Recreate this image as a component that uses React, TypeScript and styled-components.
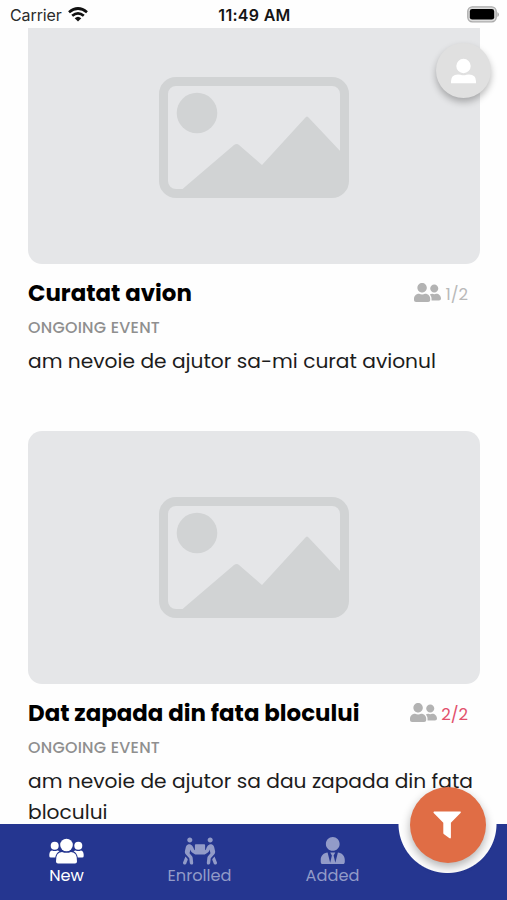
import React from 'react';
import styled, { createGlobalStyle } from 'styled-components';
import { FaPeopleCarry, FaUserTie, FaUserFriends } from 'react-icons/fa';

const GlobalStyle = createGlobalStyle`
  * { box-sizing: border-box; }
  body { margin: 0; background: #fff; }
`;

const Screen = styled.div`
  position: relative;
  width: 507px;
  height: 900px;
  overflow: hidden;
  display: flex;
  flex-direction: column;
  background: #fefefe;
  color: #000;
  font-family: Poppins, Inter, 'Liberation Sans', sans-serif;
  white-space: nowrap;
`;

const StatusBar = styled.header`
  flex: none;
  height: 28px;
  padding: 2px 8px 0 10px;
  display: grid;
  grid-template-columns: 1fr auto 1fr;
  align-items: center;
  font: 400 16px/26px Inter, sans-serif;
`;

const Carrier = styled.div`
  display: flex;
  align-items: center;
  gap: 6px;
  letter-spacing: -0.1px;
  color: #2b2b2b;

  svg { margin-bottom: 2px; }
`;

const Clock = styled.div`
  font-weight: 600;
  letter-spacing: 0.3px;
  color: #151515;
`;

const BatterySlot = styled.div`
  display: flex;
  justify-content: flex-end;
  padding-bottom: 2px;
`;

const Feed = styled.main`
  flex: 1;
  min-height: 0;
  overflow: hidden;
  padding: 0 27px 0 28px;
`;

const Card = styled.article`
  height: 420px;

  &:first-child { margin-top: -17px; }
`;

const Thumb = styled.div`
  height: 253px;
  border-radius: 14px;
  background: #e5e6e8;
  display: flex;
  justify-content: center;
  align-items: center;
`;

const TitleRow = styled.div`
  margin-top: 13px;
  height: 32px;
  display: flex;
  justify-content: space-between;
  align-items: center;
  padding-right: 12px;
`;

const Title = styled.h2`
  margin: 0;
  font-size: 22.9px;
  line-height: 32px;
  font-weight: 700;
`;

const Attendance = styled.div<{ $full: boolean }>`
  display: flex;
  align-items: center;
  gap: 4px;
  font-size: 16.5px;
  line-height: 24px;
  color: ${(p) => (p.$full ? '#e2506c' : '#b9b9b9')};

  svg { color: #b3b3b3; margin-bottom: 2px; }
  span { padding-top: 4px; }
`;

const Status = styled.div`
  margin-top: 7px;
  font-size: 15.9px;
  line-height: 24px;
  font-weight: 500;
  letter-spacing: 0.25px;
  color: #8f8f8f;
`;

const Description = styled.p`
  margin: 6px 0 0;
  font-size: 20.2px;
  line-height: 31px;
  color: #1c1c1c;
`;

const ProfileButton = styled.button`
  position: absolute;
  top: 43px;
  right: 16px;
  width: 55px;
  height: 55px;
  padding: 0;
  border: 0;
  border-radius: 50%;
  background: #e0e0e0;
  box-shadow: 0 4px 7px rgba(0, 0, 0, 0.27);
  display: grid;
  place-items: center;
`;

const TabBar = styled.nav`
  position: absolute;
  inset: auto 0 0 0;
  height: 76px;
  padding-right: 108px;
  display: grid;
  grid-template-columns: repeat(3, 133px);
  background: radial-gradient(circle at 447.5px 0, transparent 48.5px, #253690 49.5px);
`;

const Tab = styled.div<{ $active?: boolean }>`
  display: flex;
  flex-direction: column;
  align-items: center;
  padding-top: 13px;
  font-size: 16.2px;
  line-height: 24px;
  color: ${(p) => (p.$active ? '#fff' : '#929bc8')};
`;

const TabIcon = styled.div`
  height: 27px;
  display: flex;
  align-items: center;
`;

const FilterButton = styled.button`
  position: absolute;
  right: 21.5px;
  bottom: 37.5px;
  width: 76px;
  height: 76px;
  padding: 0;
  border: 0;
  border-radius: 50%;
  background: #e06d45;
  box-shadow: 0 4px 10px rgba(0, 0, 0, 0.3);
  display: grid;
  place-items: center;
`;

const WifiIcon = () => (
  <svg width="20" height="15" viewBox="0 0 20 15" fill="none" stroke="#111" strokeWidth="2.7">
    <path d="M1 5.2Q10-2.2 19 5.2" />
    <path d="M4.2 8.8Q10 3.8 15.8 8.8" />
    <path d="M6.7 11.2Q10 8.2 13.3 11.2L10 14.6Z" fill="#111" stroke="none" />
  </svg>
);

const BatteryIcon = () => (
  <svg width="32" height="17" viewBox="0 0 32 17">
    <rect x=".8" y=".8" width="28.4" height="15" rx="4.5" fill="#ddd" stroke="#aaa" strokeWidth="1.3" />
    <rect x="2.8" y="3" width="24.4" height="10.6" rx="2.4" fill="#000" />
    <path d="M30.4 6v5q1.6-1 1.6-2.5T30.4 6Z" fill="#aaa" />
  </svg>
);

const PhotoPlaceholder = () => (
  <svg width="190" height="121" viewBox="0 0 190 121">
    <rect x="4.5" y="4.5" width="181" height="112" rx="12.5" fill="none" stroke="#d1d3d4" strokeWidth="9" />
    <circle cx="38" cy="36" r="20.3" fill="#d1d3d4" />
    <path d="M22 113Q24 112 27 109L75 68Q78 66 80 68L103 88 146 41Q148 38 150 41L183 76V113Z" fill="#d1d3d4" />
  </svg>
);

const PersonIcon = () => (
  <svg width="26" height="26" viewBox="0 0 26 26" fill="#fff">
    <circle cx="12.5" cy="8" r="7.2" />
    <path d="M0 25.2v-2q0-6.8 7-6.8Q8.5 16.4 9.5 16.8q3 1 6 0 1-.4 2.5-.4 7 0 7 6.8v2Z" />
  </svg>
);

const GroupIcon = () => (
  <svg width="35" height="26" viewBox="0 0 35 26" fill="currentColor">
    <circle cx="17.5" cy="7" r="6.3" />
    <circle cx="5.7" cy="7.8" r="4" />
    <circle cx="29.3" cy="7.8" r="4" />
    <path d="M7 23.5Q6.5 14.3 13 14q4.5 1.7 9 0 6.5.3 6 9.5 0 2-2 2H9q-2 0-2-2Z" />
    <path d="M3 12.4q2.7 1.2 5.4 0 1.1 0 2 .9Q7 15 6.2 19.5H1.8Q.3 19.5.3 18q-.3-5 2.7-5.6ZM32 12.4q-2.7 1.2-5.4 0-1.1 0-2 .9Q28 15 28.8 19.5h4.4q1.5 0 1.5-1.5.3-5-2.7-5.6Z" />
  </svg>
);

const FunnelIcon = () => (
  <svg width="29" height="28" viewBox="0 0 29 28" fill="#fff">
    <path d="M1 .5H27.5Q28.3 1 27.5 2L17.9 11.7V26.5Q17.5 28 16.2 27L11 23.3Q10.3 22.8 10.3 22V11.7L.7 2Q0 1 1 .5Z" />
  </svg>
);

const events = [
  { title: 'Curatat avion', count: '1/2', full: false, text: ['am nevoie de ajutor sa-mi curat avionul'] },
  { title: 'Dat zapada din fata blocului', count: '2/2', full: true, text: ['am nevoie de ajutor sa dau zapada din fata', 'blocului'] },
];

export default function App() {
  return (
    <Screen>
      <GlobalStyle />
      <StatusBar>
        <Carrier>Carrier <WifiIcon /></Carrier>
        <Clock>11:49 AM</Clock>
        <BatterySlot><BatteryIcon /></BatterySlot>
      </StatusBar>
      <Feed>
        {events.map((e) => (
          <Card key={e.title}>
            <Thumb><PhotoPlaceholder /></Thumb>
            <TitleRow>
              <Title>{e.title}</Title>
              <Attendance $full={e.full}>
                <FaUserFriends size={27} />
                <span>{e.count}</span>
              </Attendance>
            </TitleRow>
            <Status>ONGOING EVENT</Status>
            <Description>
              {e.text.map((line, i) => (
                <React.Fragment key={line}>{i > 0 && <br />}{line}</React.Fragment>
              ))}
            </Description>
          </Card>
        ))}
      </Feed>
      <ProfileButton aria-label="Profile"><PersonIcon /></ProfileButton>
      <TabBar>
        <Tab $active>
          <TabIcon><GroupIcon /></TabIcon>
          <span>New</span>
        </Tab>
        <Tab>
          <TabIcon><FaPeopleCarry size={34} /></TabIcon>
          <span>Enrolled</span>
        </Tab>
        <Tab>
          <TabIcon><FaUserTie size={27.5} /></TabIcon>
          <span>Added</span>
        </Tab>
      </TabBar>
      <FilterButton aria-label="Filter"><FunnelIcon /></FilterButton>
    </Screen>
  );
}
